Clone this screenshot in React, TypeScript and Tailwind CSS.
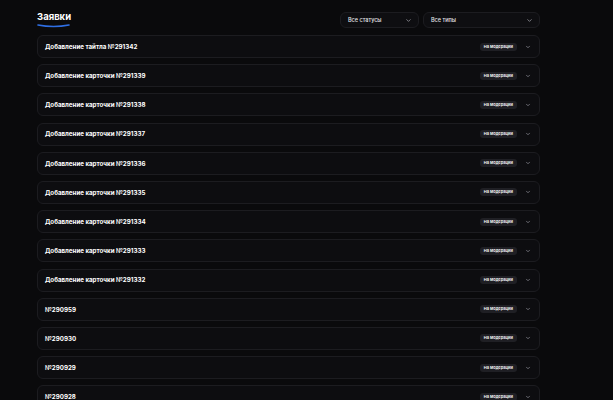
import { ChevronDown } from 'lucide-react';

const rows = [
  'Добавление тайтла №291342',
  'Добавление карточки №291339',
  'Добавление карточки №291338',
  'Добавление карточки №291337',
  'Добавление карточки №291336',
  'Добавление карточки №291335',
  'Добавление карточки №291334',
  'Добавление карточки №291333',
  'Добавление карточки №291332',
  '№290959',
  '№290930',
  '№290929',
  '№290928',
];

function Select({ label, width }: { label: string; width: string }) {
  return (
    <div className={`${width} h-[16px] flex items-center justify-between pl-[7px] pr-[6px] rounded-[6px] border border-[#1c1c20] bg-[#0e0e11]`}>
      <span className="text-[5.5px] font-medium text-[#e4e4e7]">{label}</span>
      <ChevronDown size={7} className="text-[#a1a1aa]" strokeWidth={2.5} />
    </div>
  );
}

export default function App() {
  return (
    <div className="w-[613px] h-[400px] overflow-hidden bg-[#0a0a0c]" style={{ fontFamily: 'Inter, "Noto Sans", sans-serif' }}>
      <div className="ml-[37px] w-[503px] pt-[10px]">
        <div className="flex items-start justify-between h-[25px]">
          <div className="flex flex-col">
            <span className="text-[9.5px] font-bold text-white leading-[13px]">Заявки</span>
            <svg width="33" height="4" viewBox="0 0 33 4" className="mt-[1px]">
              <path d="M1 1 Q16.5 4 32 1" stroke="#2f6fe4" strokeWidth="1.6" fill="none" strokeLinecap="round" />
            </svg>
          </div>
          <div className="flex gap-[4px] mt-[2px]">
            <Select label="Все статусы" width="w-[79px]" />
            <Select label="Все типы" width="w-[117px]" />
          </div>
        </div>
        <div className="flex flex-col gap-[6.2px]">
          {rows.map((r) => (
            <div key={r} className="h-[23px] shrink-0 flex items-center justify-between pl-[7px] pr-[8px] rounded-[6px] border border-[#1c1c20] bg-[#0d0d10]">
              <span className="text-[6.2px] font-bold text-white">{r}</span>
              <div className="flex items-center gap-[8px]">
                <span className="h-[8px] px-[4px] flex items-center rounded-[3px] bg-[#1f1f24] text-[4px] font-semibold text-white">На модерации</span>
                <ChevronDown size={6} className="text-[#a1a1aa]" strokeWidth={2.5} />
              </div>
            </div>
          ))}
        </div>
      </div>
    </div>
  );
}
